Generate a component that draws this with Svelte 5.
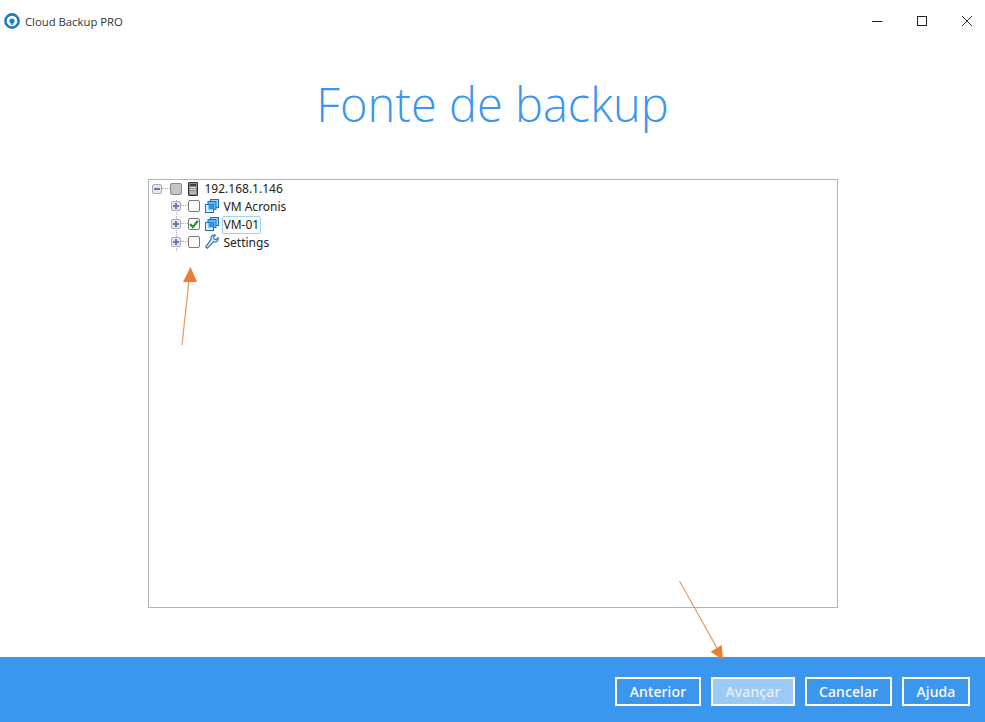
<script lang="ts">
  const buttons = [
    { label: "Anterior", width: 86 },
    { label: "Avançar", width: 84, disabled: true },
    { label: "Cancelar", width: 87 },
    { label: "Ajuda", width: 68 },
  ];

  const nodes = [
    { label: "VM Acronis", icon: "vm", checked: false, focus: false },
    { label: "VM-01", icon: "vm", checked: true, focus: true },
    { label: "Settings", icon: "wrench", checked: false, focus: false },
  ];
</script>

<div class="window">
  <header class="titlebar">
    <div class="app-name">
      <svg class="logo" width="16" height="16" viewBox="0 0 16 16">
        <circle cx="8" cy="8" r="6.600" fill="none" stroke="#1b7dc4" stroke-width="2.600" />
        <circle cx="8" cy="8" r="2.600" fill="#1b7dc4" />
        <path d="M8 9v3" stroke="#1b7dc4" stroke-width="1.400" />
      </svg>
      <span>Cloud Backup PRO</span>
    </div>
    <div class="window-controls">
      <svg width="12" height="12" viewBox="0 0 12 12"><path d="M1 6.500h10.500" stroke="#222" fill="none" /></svg>
      <svg width="12" height="12" viewBox="0 0 12 12"><rect x="1.500" y="1.500" width="9" height="9" stroke="#222" fill="none" /></svg>
      <svg width="12" height="12" viewBox="0 0 12 12"><path d="M1 1l10 10M11 1L1 11" stroke="#333" fill="none" /></svg>
    </div>
  </header>

  <main class="content">
    <h1>Fonte de backup</h1>

    <div class="tree">
      <div class="row root">
        <span class="expander"><i class="minus"></i></span>
        <span class="dash"></span>
        <span class="check mixed"></span>
        <svg class="icon" width="10" height="14" viewBox="0 0 10 14">
          <rect x="0.500" y="0.500" width="9" height="13" rx="0.500" fill="#8d9093" stroke="#2f3133" />
          <rect x="2" y="2" width="6" height="2" fill="#3d3f42" />
          <rect x="2" y="5" width="6" height="1" fill="#d5d7d9" />
          <rect x="2" y="7" width="6" height="1" fill="#d5d7d9" />
          <rect x="2" y="9" width="6" height="3" fill="#b4b6b8" />
        </svg>
        <span class="label">192.168.1.146</span>
      </div>
      <div class="children">
        {#each nodes as node}
          <div class="row">
            <span class="expander"><i class="minus"></i><i class="bar"></i></span>
            <span class="dash short"></span>
            <span class="check">
              {#if node.checked}
                <svg width="10" height="10" viewBox="0 0 10 10"><path d="M1 5l2.800 3L9 1.800" stroke="#1f9a2e" stroke-width="2.200" fill="none" /></svg>
              {/if}
            </span>
            {#if node.icon === "vm"}
              <svg class="icon" width="14" height="14" viewBox="0 0 14 14">
                <rect x="5.500" y="0.500" width="8" height="8" fill="#a9d6f8" stroke="#0f74c8" />
                <rect x="3" y="2.500" width="8" height="8" fill="#6db8f1" stroke="#0f74c8" />
                <rect x="0.500" y="5.500" width="8" height="8" fill="#d9eefe" stroke="#0f74c8" />
                <rect x="3.500" y="5.500" width="5" height="5" fill="#2f97e6" />
              </svg>
            {:else}
              <svg class="icon" width="14" height="15" viewBox="0 0 14 15">
                <path d="M0.800 12.800l1.500 1.500 6.300-6.600c1.900.7 3.900-.1 4.500-2 .2-.7.200-1.400 0-2l-2 2-2-.6-.6-2 2-2c-2-.6-4 .4-4.500 2.400-.2.700-.1 1.300.1 1.900z" fill="#d3e9f8" stroke="#2c6fa6" stroke-width="1.100" />
              </svg>
            {/if}
            <span class="label" class:focus={node.focus}>{node.label}</span>
          </div>
        {/each}
      </div>
    </div>
  </main>

  <footer class="actions">
    {#each buttons as button}
      <button class:disabled={button.disabled} style="width: {button.width}px">{button.label}</button>
    {/each}
  </footer>

  <svg class="annotations" width="985" height="722" viewBox="0 0 985 722">
    <path d="M182 345L189 280" stroke="#f09a5f" stroke-width="1.300" fill="none" />
    <path d="M190.500 267L197 282L183 282Z" fill="#ed7d31" />
    <path d="M679.500 581L717 648" stroke="#ed7d31" stroke-width="1" fill="none" />
    <path d="M723 660L710.700 651.700L721.700 645Z" fill="#ed7d31" />
  </svg>
</div>

<style>
  :global(body) {
    background: #fff;
  }

  .window {
    position: relative;
    width: 985px;
    height: 722px;
    display: flex;
    flex-direction: column;
    overflow: hidden;
    background: #fff;
    font-family: "Noto Sans", "Open Sans", sans-serif;
    color: #222;
  }

  .titlebar {
    height: 42px;
    flex: none;
    display: flex;
    justify-content: space-between;
    align-items: center;
    padding: 0 12px 0 4px;
  }

  .app-name {
    display: flex;
    align-items: center;
    gap: 5px;
    font-family: "Open Sans", sans-serif;
    font-size: 11.300px;
    color: #333;
  }

  .window-controls {
    display: flex;
    gap: 33px;
  }

  .window-controls svg {
    display: block;
  }

  .content {
    flex: 1;
    display: flex;
    flex-direction: column;
    align-items: center;
  }

  h1 {
    margin: 29px 0 0;
    height: 108px;
    font-family: "Open Sans", sans-serif;
    font-weight: 300;
    font-size: 47px;
    line-height: 66px;
    color: #3b96ee;
  }

  .tree {
    width: 690px;
    height: 429px;
    box-sizing: border-box;
    border: 1px solid #b4b4b4;
    padding: 0 0 0 3px;
    font-size: 12px;
  }

  .row {
    height: 18px;
    display: flex;
    align-items: center;
  }

  .row.root {
    height: 17.500px;
  }

  .children {
    padding-left: 19px;
    background: repeating-linear-gradient(to bottom, #a9a9a9 0 1px, transparent 1px 2px) 24px 2px / 1px 52px no-repeat;
  }

  .children .row {
    height: 17.800px;
  }

  .children .label {
    margin-top: 2px;
  }

  .expander {
    position: relative;
    width: 10px;
    height: 10px;
    box-sizing: border-box;
    border: 1px solid #a9abbf;
    border-radius: 2px;
    background: #e4e7f3;
    flex: none;
  }

  .minus {
    position: absolute;
    left: 1px;
    top: 3px;
    width: 6px;
    height: 2px;
    background: #6a78ab;
  }

  .bar {
    position: absolute;
    left: 3px;
    top: 1px;
    width: 2px;
    height: 6px;
    background: #6a78ab;
  }

  .dash {
    width: 8px;
    height: 1px;
    flex: none;
    border-top: 1px dotted #a9a9a9;
  }

  .dash.short {
    width: 7px;
  }

  .check {
    width: 12px;
    height: 12px;
    box-sizing: border-box;
    display: flex;
    align-items: center;
    justify-content: center;
    border: 1px solid #777;
    border-radius: 2px;
    background: #fff;
    flex: none;
  }

  .check.mixed {
    background: #c6c6c6;
    border-color: #888;
  }

  .icon {
    flex: none;
    margin-left: 5px;
  }

  .root .icon {
    margin-left: 6px;
  }

  .label {
    margin-left: 3px;
    padding: 0 1px;
    border: 1px solid transparent;
    line-height: 16px;
    color: #222;
  }

  .root .label {
    margin-left: 5px;
  }

  .label.focus {
    border-color: #9ad4f2;
    border-radius: 2px;
  }

  .actions {
    height: 65px;
    flex: none;
    box-sizing: border-box;
    display: flex;
    justify-content: flex-end;
    align-items: center;
    gap: 10px;
    padding: 4px 15px 0 0;
    background: #3b96ee;
  }

  button {
    height: 29px;
    box-sizing: border-box;
    border: 2px solid #fff;
    background: transparent;
    color: #fff;
    padding: 0;
    font-family: "Noto Sans", sans-serif;
    font-weight: 500;
    font-size: 14px;
    letter-spacing: 0.1px;
  }

  button.disabled {
    background: #9ccaf6;
    color: #e6f2fd;
  }

  .annotations {
    position: absolute;
    left: 0;
    top: 0;
    pointer-events: none;
  }
</style>
